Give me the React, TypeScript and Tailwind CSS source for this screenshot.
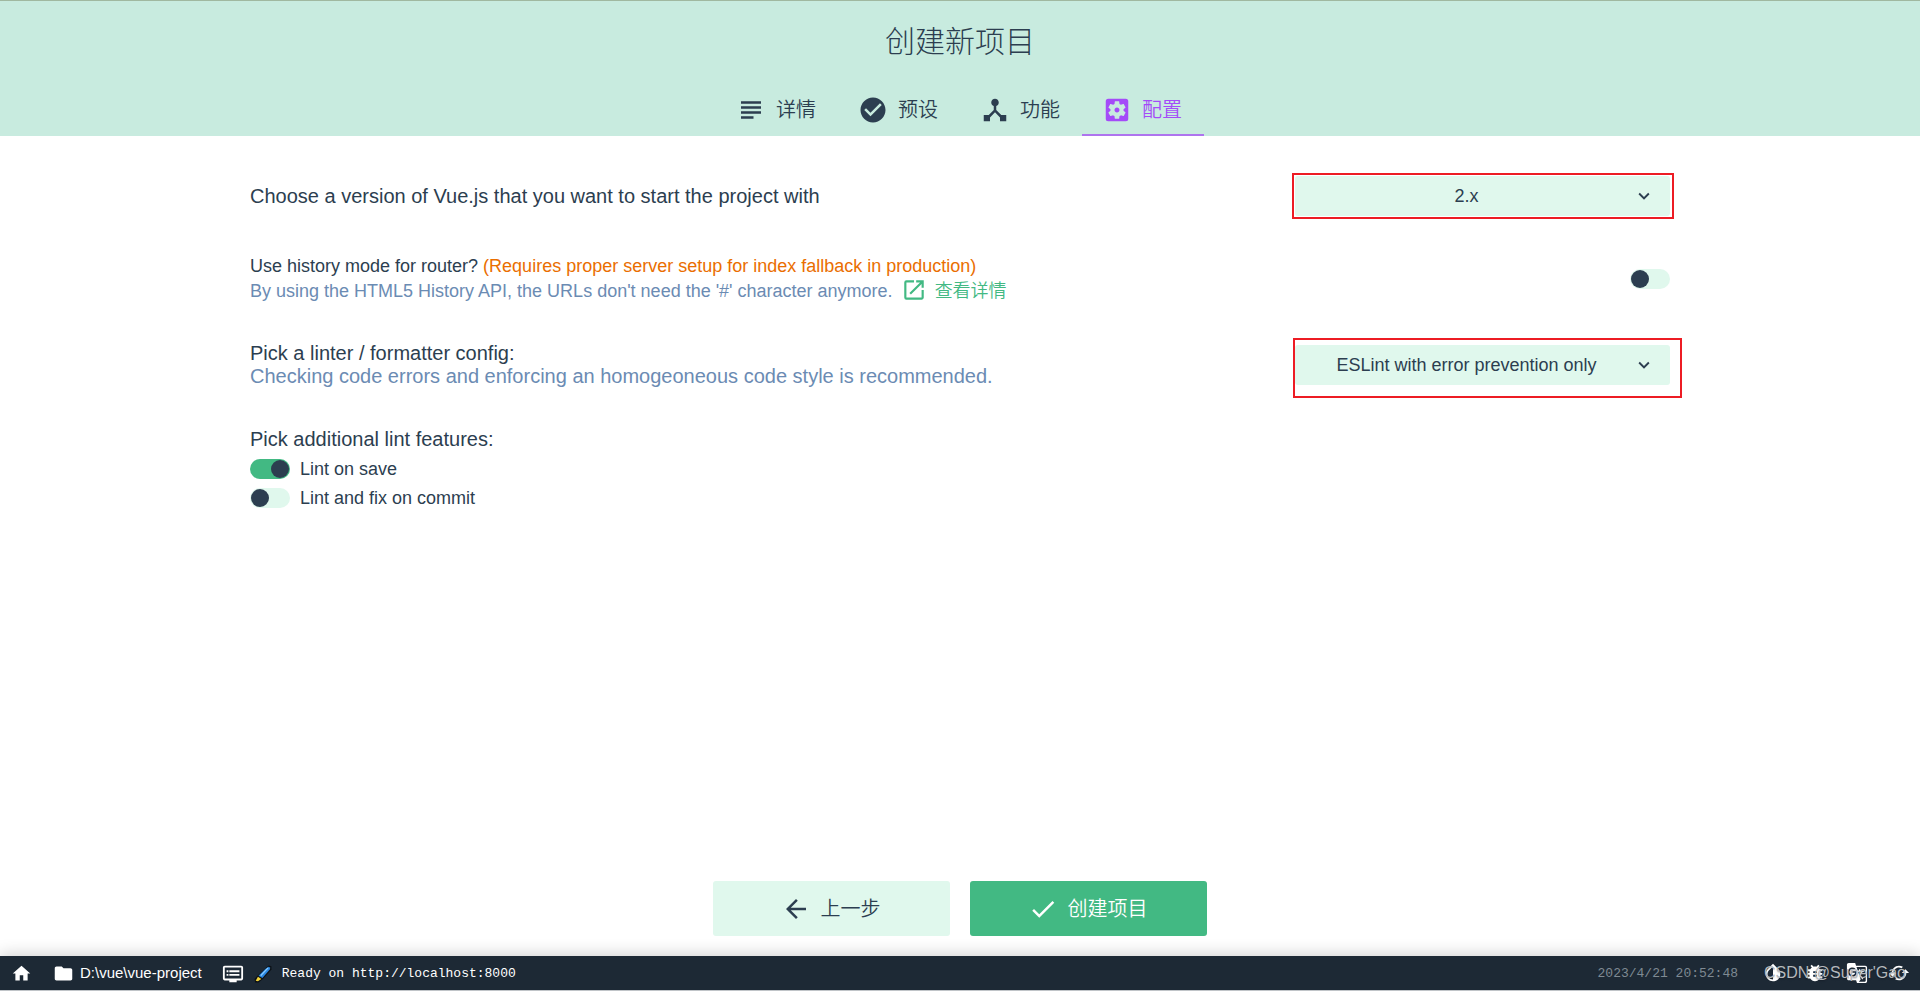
import { useState } from "react";
import {
  MdArrowBack,
  MdBugReport,
  MdCached,
  MdCheckCircle,
  MdDeviceHub,
  MdDone,
  MdDvr,
  MdFolder,
  MdGTranslate,
  MdHome,
  MdInvertColors,
  MdKeyboardArrowDown,
  MdOpenInNew,
  MdSettingsApplications,
  MdSubject,
} from "react-icons/md";

const tabs = [
  { label: "详情", icon: MdSubject },
  { label: "预设", icon: MdCheckCircle },
  { label: "功能", icon: MdDeviceHub },
  { label: "配置", icon: MdSettingsApplications },
];

type SwitchProps = {
  id: string;
  checked: boolean;
  onChange: (value: boolean) => void;
};

function Switch({ id, checked, onChange }: SwitchProps) {
  return (
    <input
      id={id}
      type="checkbox"
      role="switch"
      checked={checked}
      onChange={(e) => onChange(e.target.checked)}
      className="flex h-5 w-10 shrink-0 cursor-pointer appearance-none items-center rounded-full bg-[#e0f8ed] px-px before:size-[18px] before:rounded-full before:bg-[#2c3e50] checked:justify-end checked:bg-[#42b983]"
    />
  );
}

type SelectProps = {
  id: string;
  options: string[];
};

function Select({ id, options }: SelectProps) {
  return (
    <div className="grid items-center">
      <select
        id={id}
        className="col-start-1 row-start-1 h-10 w-full appearance-none rounded-[3px] bg-[#e0f8ed] pr-8 text-center text-lg text-[#2c3e50]"
      >
        {options.map((option) => (
          <option key={option}>{option}</option>
        ))}
      </select>
      <MdKeyboardArrowDown className="pointer-events-none col-start-1 row-start-1 mr-[15px] size-[22px] justify-self-end text-[#2c3e50]" />
    </div>
  );
}

function Header() {
  return (
    <header className="border-t border-[#a0b8a0] bg-[#c8ebdf]">
      <h1 className="pt-[19px] text-center text-[30px] leading-11 font-light">创建新项目</h1>
      <nav className="mt-[17px] flex justify-center">
        {tabs.map(({ label, icon: Icon }) => (
          <button
            key={label}
            type="button"
            className={
              label === "配置"
                ? "flex h-[55px] w-[122px] items-center justify-center gap-2.5 border-b-2 border-[#ae74ee] pt-1 pr-0.5 text-xl font-[350] text-[#a44bf8]"
                : "flex h-[55px] w-[122px] items-center justify-center gap-2.5 border-b-2 border-transparent pt-1 pr-0.5 text-xl font-[350]"
            }
          >
            <Icon className="size-[30px]" />
            {label}
          </button>
        ))}
      </nav>
    </header>
  );
}

function StatusBar() {
  return (
    <footer className="flex h-[35px] items-center justify-between border-b border-[#c0c4c8] bg-[#1d2935] text-white shadow-[0_-2px_16px_rgba(0,0,0,0.18)]">
      <div className="flex items-center">
        <button type="button" aria-label="Home" className="pl-[11px]">
          <MdHome className="size-[21px]" />
        </button>
        <button type="button" className="flex items-center gap-1.5 pl-[21px] text-[15px]">
          <MdFolder className="size-[21px]" />
          D:\vue\vue-project
        </button>
        <button
          type="button"
          className="flex items-center gap-2.5 pt-0.5 pl-5 font-['Liberation_Mono',monospace] text-[13px]"
        >
          <MdDvr className="size-[22px]" />
          <svg viewBox="0 0 16 16" className="size-[18px]">
            <path d="M13 .5 15.500 1v3L8 12.500 4 15.500H1L.5 12.500 3 9.500Z" fill="#0c1014" />
            <path d="M13 1.500 14.500 2.500 14 4 7.500 11.500 4 9.500 10 3.500Z" fill="#2a86e0" />
            <path d="M12.500 2.500 6 9.500" stroke="#8fd0ff" strokeWidth="1" />
            <path d="M3.500 10.500 6.500 12.500 3.500 14.500 1.500 14Z" fill="#f2d43a" />
          </svg>
          Ready on http://localhost:8000
        </button>
      </div>
      <div className="relative flex items-center pr-2.5">
        <time className="pt-0.5 pr-6 font-['Liberation_Mono',monospace] text-[13px] text-[#7f8a93]">
          2023/4/21 20:52:48
        </time>
        <div className="flex gap-5">
          <button type="button" aria-label="Toggle dark mode">
            <MdInvertColors className="size-[22px]" />
          </button>
          <button type="button" aria-label="Report a bug">
            <MdBugReport className="size-[22px]" />
          </button>
          <button type="button" aria-label="Translate">
            <MdGTranslate className="size-[22px]" />
          </button>
          <button type="button" aria-label="Reset">
            <MdCached className="size-[22px]" />
          </button>
        </div>
        <span className="pointer-events-none absolute right-3.5 text-base text-[#b4b8bc] text-shadow-sm">
          CSDN @Super'Gao
        </span>
      </div>
    </footer>
  );
}

export default function App() {
  const [history, setHistory] = useState(false);
  const [lintOnSave, setLintOnSave] = useState(true);
  const [lintOnCommit, setLintOnCommit] = useState(false);

  return (
    <div className="flex min-h-screen flex-col bg-white font-['Liberation_Sans','Noto_Sans_CJK_SC',sans-serif] text-[#2c3e50]">
      <Header />
      <main className="flex grow flex-col px-[250px] pt-[37px]">
        <div className="flex items-center justify-between">
          <label htmlFor="version" className="text-xl">
            Choose a version of Vue.js that you want to start the project with
          </label>
          <div className="-mr-1 w-[382px] border-2 border-[#ed1c24] py-px pr-0.5 pl-px">
            <Select id="version" options={["2.x", "3.x"]} />
          </div>
        </div>

        <div className="mt-[35px] flex items-center justify-between text-lg leading-[25px]">
          <div>
            <label htmlFor="history" className="block">
              Use history mode for router?{" "}
              <span className="text-[#ea6e00]">
                (Requires proper server setup for index fallback in production)
              </span>
            </label>
            <p className="flex h-[25px] items-center text-[#6b8bb3]">
              By using the HTML5 History API, the URLs don't need the '#' character anymore.
              <a href="#history" className="ml-2 flex items-center gap-2 font-[350] text-[#42b983]">
                <MdOpenInNew className="mb-1 size-[26px]" />
                查看详情
              </a>
            </p>
          </div>
          <Switch id="history" checked={history} onChange={setHistory} />
        </div>

        <div className="mt-[34px] flex items-start justify-between text-xl">
          <div className="pt-1 leading-[23px]">
            <label htmlFor="linter">Pick a linter / formatter config:</label>
            <p className="text-[#6b8bb3]">
              Checking code errors and enforcing an homogeoneous code style is recommended.
            </p>
          </div>
          <div className="-mr-3 w-[389px] border-2 border-[#ed1c24] pt-[5px] pr-2.5 pb-[11px]">
            <Select
              id="linter"
              options={["ESLint with error prevention only", "ESLint + Airbnb config"]}
            />
          </div>
        </div>

        <fieldset className="mt-[26px] text-lg">
          <legend className="text-xl leading-[30px]">Pick additional lint features:</legend>
          <div className="flex h-[29px] items-center gap-2.5">
            <Switch id="save" checked={lintOnSave} onChange={setLintOnSave} />
            <label htmlFor="save">Lint on save</label>
          </div>
          <div className="flex h-[29px] items-center gap-2.5">
            <Switch id="commit" checked={lintOnCommit} onChange={setLintOnCommit} />
            <label htmlFor="commit">Lint and fix on commit</label>
          </div>
        </fieldset>

        <div className="mt-auto flex justify-center gap-5 pb-5 text-xl font-[350]">
          <button
            type="button"
            className="flex h-[55px] w-[237px] items-center justify-center gap-2.5 rounded-[3px] bg-[#e0f8ed] pr-0.5"
          >
            <MdArrowBack className="size-[30px]" />
            上一步
          </button>
          <button
            type="button"
            className="flex h-[55px] w-[237px] items-center justify-center gap-2.5 rounded-[3px] bg-[#42b983] pr-0.5 text-white"
          >
            <MdDone className="size-[30px]" />
            创建项目
          </button>
        </div>
      </main>
      <StatusBar />
    </div>
  );
}
